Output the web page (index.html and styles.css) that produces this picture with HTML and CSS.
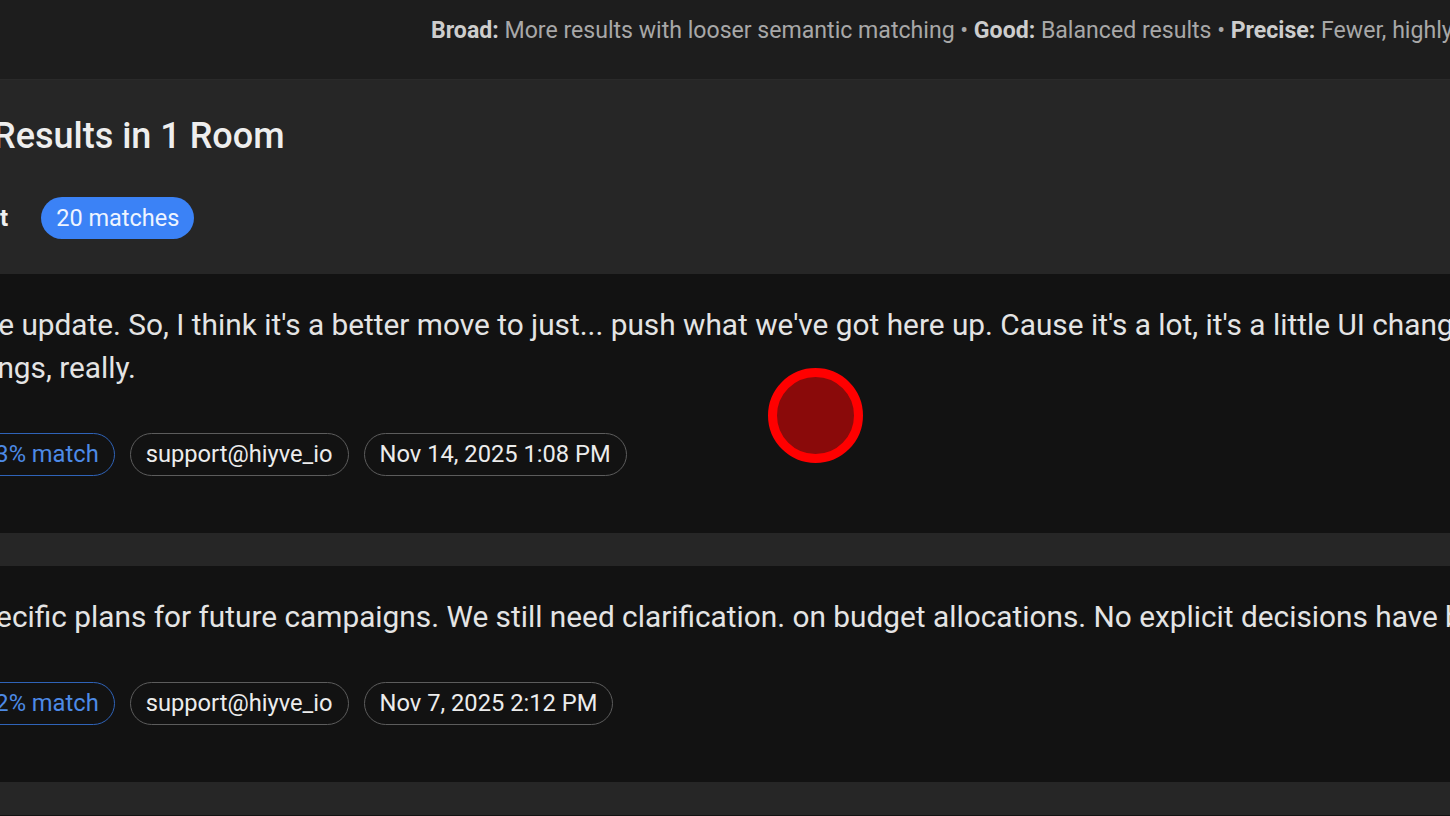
FILE: index.html
```html
<!DOCTYPE html>
<html lang="en">
<head>
<meta charset="utf-8">
<title>Search results</title>
<link rel="stylesheet" href="styles.css">
</head>
<body>
<div class="viewport">
  <div class="content">
    <div class="topbar">
      <p class="hint"><b>Broad:</b> More results with looser semantic matching • <b>Good:</b> Balanced results • <b>Precise:</b> Fewer, highly relevant results</p>
    </div>
    <section class="summary">
      <h2 class="title">Results in 1 Room</h2>
      <div class="room-row">
        <span class="room-name">Test</span>
        <span class="count-pill">20 matches</span>
      </div>
    </section>
    <div class="results">
      <article class="card">
        <p class="excerpt">The update. So, I think it's a better move to just... push what we've got here up. Cause it's a lot, it's a little UI changes and other<br>things, really.</p>
        <div class="chips">
          <span class="chip chip-score">83% match</span>
          <span class="chip">support@hiyve_io</span>
          <span class="chip">Nov 14, 2025 1:08 PM</span>
        </div>
      </article>
      <article class="card">
        <p class="excerpt">specific plans for future campaigns. We still need clarification. on budget allocations. No explicit decisions have been made yet.</p>
        <div class="chips">
          <span class="chip chip-score">82% match</span>
          <span class="chip">support@hiyve_io</span>
          <span class="chip">Nov 7, 2025 2:12 PM</span>
        </div>
      </article>
      <article class="card">
        <p class="excerpt">Next result</p>
      </article>
    </div>
  </div>
  <div class="cursor-dot"></div>
</div>
</body>
</html>
```
FILE: styles.css
```css
* { box-sizing: border-box; }
html, body {
  margin: 0;
  padding: 0;
  background: #121212;
  font-family: Roboto, "Liberation Sans", sans-serif;
  color: #e6e6e6;
}
.viewport {
  position: relative;
  width: 1450px;
  height: 816px;
  overflow: hidden;
}
.content {
  width: 2600px;
  margin-left: -24px;
}
.topbar {
  height: 80px;
  background: #1d1d1d;
  border-bottom: 1px solid #2a2a2a;
  padding: 17px 0 0 455px;
}
.hint {
  margin: 0;
  font-size: 23.1px;
  line-height: 28px;
  color: #a8a8a8;
  white-space: nowrap;
}
.hint b {
  color: #cdcdcd;
  font-weight: 700;
}
.summary {
  background: #262626;
  padding: 34px 0 35px 0;
}
.title {
  margin: 0 0 39px 17px;
  font-size: 36px;
  line-height: 44px;
  font-weight: 500;
  color: #eeeeee;
}
.room-row {
  display: flex;
  align-items: center;
  gap: 33px;
  margin-left: -15px;
}
.room-name {
  font-size: 24px;
  font-weight: 700;
  color: #f0f0f0;
}
.count-pill {
  background: #3b82f6;
  color: #eef4ff;
  border-radius: 21px;
  font-size: 23.5px;
  line-height: 28px;
  padding: 7px 15px;
}
.results {
  background: #262626;
  display: flex;
  flex-direction: column;
  gap: 33px;
}
.card {
  background: #121212;
  padding: 29px 0 57px 0;
}
.excerpt {
  margin: 0 0 44px -12px;
  font-size: 29.8px;
  line-height: 43px;
  color: #e4e4e4;
  white-space: nowrap;
}
.chips {
  display: flex;
  gap: 15px;
  margin-left: -10px;
}
.chip {
  border: 1px solid #5c5c5c;
  border-radius: 22px;
  font-size: 23.7px;
  line-height: 27px;
  padding: 7px 15px;
  color: #ececec;
  white-space: nowrap;
}
.chip-score {
  border-color: #2f63b8;
  color: #4d8ae6;
}
.cursor-dot {
  position: absolute;
  left: 768px;
  top: 368px;
  width: 95px;
  height: 95px;
  border-radius: 50%;
  background: #8a0a0a;
  border: 9px solid #ff0000;
}
```
